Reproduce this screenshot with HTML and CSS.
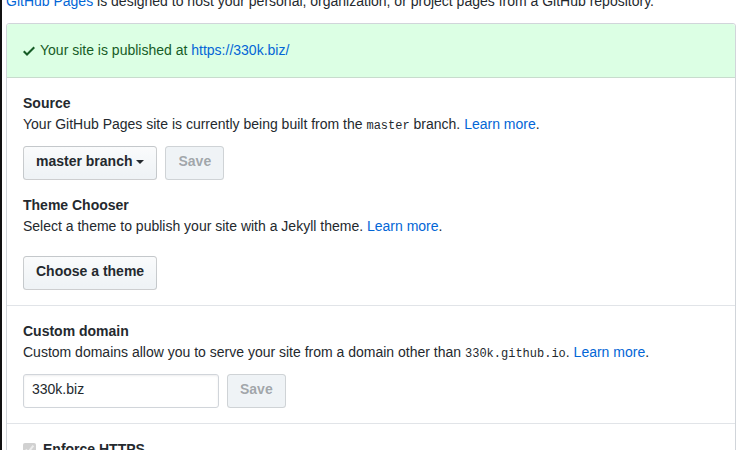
FILE: index.html
```html
<!DOCTYPE html>
<html lang="en">
<head>
<meta charset="utf-8">
<title>GitHub Pages</title>
<link rel="stylesheet" href="styles.css">
</head>
<body>
<div class="page">
  <p class="intro"><a href="#">GitHub Pages</a> is designed to host your personal, organization, or project pages from a GitHub repository.</p>
  <div class="box">
    <div class="flash">
      <svg class="check" width="12" height="16" viewBox="0 0 12 16" aria-hidden="true"><path fill-rule="evenodd" d="M12 5l-8 8-4-4 1.5-1.5L4 10l6.5-6.5L12 5z"/></svg>
      <span>Your site is published at <a href="#">https://330k.biz/</a></span>
    </div>
    <div class="row">
      <div class="group">
        <h3>Source</h3>
        <p class="desc">Your GitHub Pages site is currently being built from the <code>master</code> branch. <a href="#">Learn more</a>.</p>
        <div class="actions">
          <button class="btn" type="button">master branch<span class="caret"></span></button>
          <button class="btn" type="button" disabled>Save</button>
        </div>
      </div>
      <div class="group theme">
        <h3>Theme Chooser</h3>
        <p class="desc">Select a theme to publish your site with a Jekyll theme. <a href="#">Learn more</a>.</p>
        <div class="actions">
          <button class="btn" type="button">Choose a theme</button>
        </div>
      </div>
    </div>
    <div class="row">
      <h3>Custom domain</h3>
      <p class="desc">Custom domains allow you to serve your site from a domain other than <code>330k.github.io</code>. <a href="#">Learn more</a>.</p>
      <div class="actions">
        <input class="input" type="text" value="330k.biz">
        <button class="btn" type="button" disabled>Save</button>
      </div>
    </div>
    <div class="row">
      <label class="checkline"><input type="checkbox" checked disabled><span>Enforce HTTPS</span></label>
    </div>
  </div>
</div>
</body>
</html>
```
FILE: styles.css
```css
html, body {
  margin: 0;
  background: #fff;
}
body {
  font-family: "Liberation Sans", Arial, sans-serif;
  font-size: 14px;
  line-height: 21px;
  color: #24292e;
  overflow: hidden;
}
a {
  color: #0366d6;
  text-decoration: none;
}
.page {
  padding: 0 10px 0 6px;
  background: linear-gradient(#111, #111) no-repeat 0 7px / 2px 100%;
}
.intro {
  margin: -9px 0 11px;
}
.box {
  border: 1px solid #d1d5da;
  border-radius: 3px;
}
.flash {
  display: flex;
  align-items: center;
  gap: 5px;
  padding: 16px;
  background: #dcffe4;
  color: #165c26;
  border-radius: 3px 3px 0 0;
  border-bottom: 1px solid #c8dccd;
}
.check {
  fill: #165c26;
  flex: none;
}
.row {
  padding: 15px 16px 15px;
  border-top: 1px solid #e1e4e8;
}
.flash + .row {
  border-top: 0;
}
h3 {
  margin: 0;
  font-size: 14px;
  font-weight: bold;
  line-height: 21px;
}
.desc {
  margin: 0 0 11px;
}
.theme {
  margin-top: 15px;
}
.theme .desc {
  margin-bottom: 19px;
}
code {
  font-family: "Liberation Mono", "DejaVu Sans Mono", monospace;
  font-size: 12px;
  line-height: 1;
}
.actions {
  display: flex;
  gap: 8px;
}
.btn {
  box-sizing: border-box;
  height: 34px;
  padding: 4px 12px 8px;
  font-family: inherit;
  font-size: 14px;
  font-weight: bold;
  line-height: 20px;
  color: #24292e;
  background: linear-gradient(-180deg, #fafbfc 0%, #eff3f6 90%);
  border: 1px solid rgba(27, 31, 35, 0.2);
  border-radius: 3.5px;
  display: inline-flex;
  align-items: center;
}
.btn:disabled {
  color: rgba(36, 41, 46, 0.4);
  background: #eff3f6;
  border-color: rgba(27, 31, 35, 0.15);
}
.caret {
  display: inline-block;
  width: 0;
  height: 0;
  margin-left: 4px;
  margin-top: 1px;
  border-top: 4px solid #24292e;
  border-left: 4px solid transparent;
  border-right: 4px solid transparent;
}
.input {
  box-sizing: border-box;
  width: 196px;
  height: 34px;
  margin: 0;
  padding: 4px 8px 8px;
  font-family: inherit;
  font-size: 14px;
  line-height: 20px;
  color: #24292e;
  border: 1px solid #d1d5da;
  border-radius: 3px;
  box-shadow: inset 0 1px 2px rgba(27, 31, 35, 0.075);
  outline: none;
}
.checkline {
  display: flex;
  align-items: center;
  gap: 7px;
  font-weight: bold;
}
.checkline input {
  margin: 0;
  width: 13px;
  height: 13px;
}
```
